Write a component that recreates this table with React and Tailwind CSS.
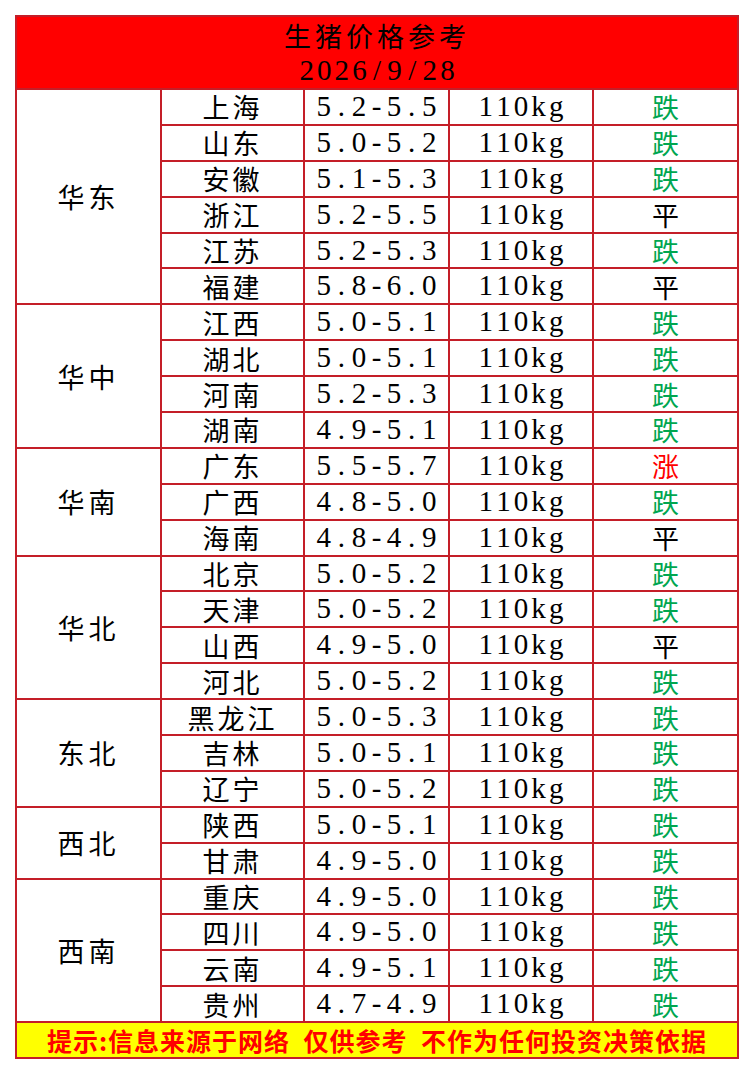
const GROUPS = [
  {
    region: "华东",
    rows: [
      ["上海", "5.2-5.5", "跌"],
      ["山东", "5.0-5.2", "跌"],
      ["安徽", "5.1-5.3", "跌"],
      ["浙江", "5.2-5.5", "平"],
      ["江苏", "5.2-5.3", "跌"],
      ["福建", "5.8-6.0", "平"],
    ],
  },
  {
    region: "华中",
    rows: [
      ["江西", "5.0-5.1", "跌"],
      ["湖北", "5.0-5.1", "跌"],
      ["河南", "5.2-5.3", "跌"],
      ["湖南", "4.9-5.1", "跌"],
    ],
  },
  {
    region: "华南",
    rows: [
      ["广东", "5.5-5.7", "涨"],
      ["广西", "4.8-5.0", "跌"],
      ["海南", "4.8-4.9", "平"],
    ],
  },
  {
    region: "华北",
    rows: [
      ["北京", "5.0-5.2", "跌"],
      ["天津", "5.0-5.2", "跌"],
      ["山西", "4.9-5.0", "平"],
      ["河北", "5.0-5.2", "跌"],
    ],
  },
  {
    region: "东北",
    rows: [
      ["黑龙江", "5.0-5.3", "跌"],
      ["吉林", "5.0-5.1", "跌"],
      ["辽宁", "5.0-5.2", "跌"],
    ],
  },
  {
    region: "西北",
    rows: [
      ["陕西", "5.0-5.1", "跌"],
      ["甘肃", "4.9-5.0", "跌"],
    ],
  },
  {
    region: "西南",
    rows: [
      ["重庆", "4.9-5.0", "跌"],
      ["四川", "4.9-5.0", "跌"],
      ["云南", "4.9-5.1", "跌"],
      ["贵州", "4.7-4.9", "跌"],
    ],
  },
]

const trendColor = {
  跌: "text-[#00a650]",
  涨: "text-[#ff0000]",
  平: "text-black",
}

const cjk = "font-['Noto_Sans_CJK_SC',sans-serif]"
const num = "font-['Liberation_Serif','Noto_Sans_CJK_SC',serif]"
const cell = "border-2 border-[#c41e28] p-0 text-center align-middle"

// half-width cells, like the fixed-pitch digits of the sheet
function Fixed({ text }) {
  return (
    <span className={`${num} inline-flex text-[29px] leading-none`}>
      {text.split("").map((ch, i) => (
        <span key={i} className="inline-block w-[17.6px] text-center">
          {ch}
        </span>
      ))}
    </span>
  )
}

export default function App() {
  return (
    <div className="min-h-[1076px] w-[752px] bg-white pl-[15px] pt-[15px]">
      <table className="w-[722px] table-fixed border-collapse border-2 border-[#c41e28] text-black">
        <colgroup>
          <col className="w-[145px]" />
          <col className="w-[143px]" />
          <col className="w-[145px]" />
          <col className="w-[144px]" />
          <col className="w-[145px]" />
        </colgroup>
        <tbody>
          <tr className="h-[73px]">
            <td colSpan={5} className={`${cell} bg-[#ff0000]`}>
              <div className={`${cjk} text-[27px] leading-[36px] tracking-[4px]`}>
                生猪价格参考
              </div>
              <div className="flex h-[34px] items-center justify-center">
                <Fixed text="2026/9/28" />
              </div>
            </td>
          </tr>
          {GROUPS.map((group) =>
            group.rows.map(([city, price, trend], i) => (
              <tr key={city} className="h-[35.9px]">
                {i === 0 && (
                  <td
                    rowSpan={group.rows.length}
                    className={`${cell} ${cjk} text-[27px] leading-none tracking-[4px]`}
                  >
                    {group.region}
                  </td>
                )}
                <td className={`${cell} ${cjk} text-[27px] leading-none tracking-[3px]`}>
                  {city}
                </td>
                <td className={cell}>
                  <Fixed text={price} />
                </td>
                <td className={cell}>
                  <Fixed text="110kg" />
                </td>
                <td
                  className={`${cell} ${cjk} text-[27px] leading-none ${trendColor[trend]}`}
                >
                  {trend}
                </td>
              </tr>
            ))
          )}
          <tr className="h-[36px]">
            <td
              colSpan={5}
              className={`${cell} bg-[#ffff00] ${cjk} text-[25px] font-semibold leading-none tracking-[1px] text-[#ff0000]`}
            >
              提示:信息来源于网络{"\u2002"}仅供参考{"\u2002"}不作为任何投资决策依据
            </td>
          </tr>
        </tbody>
      </table>
    </div>
  )
}
